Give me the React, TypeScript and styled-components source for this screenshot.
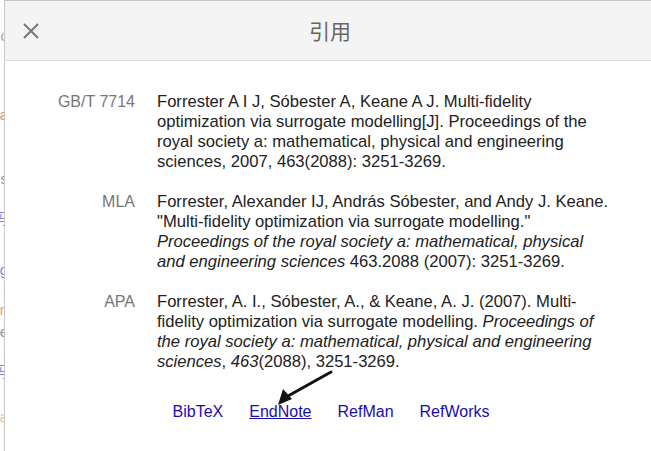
import React from "react";
import styled, { createGlobalStyle } from "styled-components";

const Global = createGlobalStyle`
  html, body { margin: 0; padding: 0; background: #fff; }
  body { font-family: "Liberation Sans", Arial, sans-serif; overflow: hidden; }
`;

const Page = styled.div`
  display: flex;
  width: 651px;
  height: 451px;
  overflow: hidden;
  position: relative;
`;

const BgStrip = styled.div`
  width: 4px;
  flex: none;
  overflow: hidden;
  display: flex;
  flex-direction: column;
  align-items: flex-end;
  opacity: 0.7;
`;

const BgLine = styled.div<{ $top: number; $color: string; $under?: boolean }>`
  margin-top: ${(p) => p.$top}px;
  height: 18px;
  line-height: 18px;
  font-size: 15px;
  color: ${(p) => p.$color};
  white-space: nowrap;
  margin-right: -4px;
  font-family: "Liberation Sans", "Noto Sans CJK SC", sans-serif;
  text-decoration: ${(p) => (p.$under ? "underline" : "none")};
  text-decoration-color: #3a3;
`;

const Dialog = styled.div`
  flex: 1;
  border-left: 1px solid #c8c8c8;
  border-top: 1px solid #c8c8c8;
  display: flex;
  flex-direction: column;
  min-width: 0;
`;

const Header = styled.div`
  height: 59px;
  background: #f4f4f4;
  border-bottom: 1px solid #dcdcdc;
  display: grid;
  grid-template-columns: 52px 1fr 48px;
  align-items: center;
  flex: none;
`;

const CloseBtn = styled.button`
  border: none;
  background: none;
  padding: 0;
  width: 52px;
  height: 59px;
  display: flex;
  align-items: center;
  justify-content: center;
  cursor: pointer;
`;

const Title = styled.h1`
  margin: 0;
  text-align: center;
  font-weight: normal;
  font-size: 21px;
  color: #666;
  font-family: "Noto Sans CJK SC", "Liberation Sans", sans-serif;
  line-height: 1;
`;

const Body = styled.div`
  padding: 31px 0 0 0;
  display: flex;
  flex-direction: column;
`;

const CiteTable = styled.div`
  display: grid;
  grid-template-columns: 130px 452px;
  column-gap: 22px;
  row-gap: 20px;
`;

const Label = styled.div`
  text-align: right;
  color: #777;
  font-size: 16px;
  line-height: 20px;
`;

const Cite = styled.div`
  color: #222;
  font-size: 16.6px;
  line-height: 20px;
`;

const Links = styled.div`
  display: flex;
  justify-content: center;
  gap: 26px;
  margin-top: 30px;
  padding-left: 6px;
`;

const Link = styled.a<{ $active?: boolean }>`
  font-size: 16px;
  line-height: 20px;
  color: #1a0dab;
  text-decoration: ${(p) => (p.$active ? "underline" : "none")};
  cursor: pointer;
`;

const Arrow = styled.svg`
  position: absolute;
  left: 270px;
  top: 362px;
  pointer-events: none;
`;

const bg: Array<[number, string, string, boolean?]> = [
  [0, "#4a6fb0", "i"],
  [9, "#9a7a5a", "c"],
  [61, "#e0504a", "a"],
  [4, "#2a8ab0", "l", true],
  [4, "#e070a0", "r"],
  [2, "#666", "s"],
  [2, "#777", "/"],
  [2, "#4a4ae0", "码"],
  [33, "#4a4ae0", "g"],
  [2, "#2aa0a0", "r"],
  [2, "#e07030", "n"],
  [4, "#666", "e"],
  [2, "#666", "r"],
  [2, "#4a4ae0", "码"],
  [27, "#f0a070", "a"],
];

export default function App() {
  return (
    <>
      <Global />
      <Page>
        <BgStrip>
          {bg.map(([t, c, ch, u], i) => (
            <BgLine key={i} $top={t} $color={c} $under={u}>
              {ch}
            </BgLine>
          ))}
        </BgStrip>
        <Dialog>
          <Header>
            <CloseBtn aria-label="close">
              <svg width="18" height="18" viewBox="0 0 18 18">
                <path d="M2 2 L16 16 M16 2 L2 16" stroke="#777" strokeWidth="2" />
              </svg>
            </CloseBtn>
            <Title>引用</Title>
            <span />
          </Header>
          <Body>
            <CiteTable>
              <Label>GB/T 7714</Label>
              <Cite>
                Forrester A I J, Sóbester A, Keane A J. Multi-fidelity optimization via surrogate
                modelling[J]. Proceedings of the royal society a: mathematical, physical and
                engineering sciences, 2007, 463(2088): 3251-3269.
              </Cite>
              <Label>MLA</Label>
              <Cite>
                Forrester, Alexander IJ, András Sóbester, and Andy J. Keane. "Multi-fidelity
                optimization via surrogate modelling."{" "}
                <i>Proceedings of the royal society a: mathematical, physical and engineering sciences</i>{" "}
                463.2088 (2007): 3251-3269.
              </Cite>
              <Label>APA</Label>
              <Cite>
                Forrester, A. I., Sóbester, A., &amp; Keane, A. J. (2007). Multi-fidelity
                optimization via surrogate modelling.{" "}
                <i>Proceedings of the royal society a: mathematical, physical and engineering sciences</i>,{" "}
                <i>463</i>(2088), 3251-3269.
              </Cite>
            </CiteTable>
            <Links>
              <Link>BibTeX</Link>
              <Link $active>EndNote</Link>
              <Link>RefMan</Link>
              <Link>RefWorks</Link>
            </Links>
          </Body>
        </Dialog>
        <Arrow width="70" height="50" viewBox="0 0 70 50">
          <path d="M61 10 L18 34" stroke="#111" strokeWidth="3" strokeLinecap="round" />
          <path d="M8 43 L13 27 L22 37 Z" fill="#111" />
        </Arrow>
      </Page>
    </>
  );
}
